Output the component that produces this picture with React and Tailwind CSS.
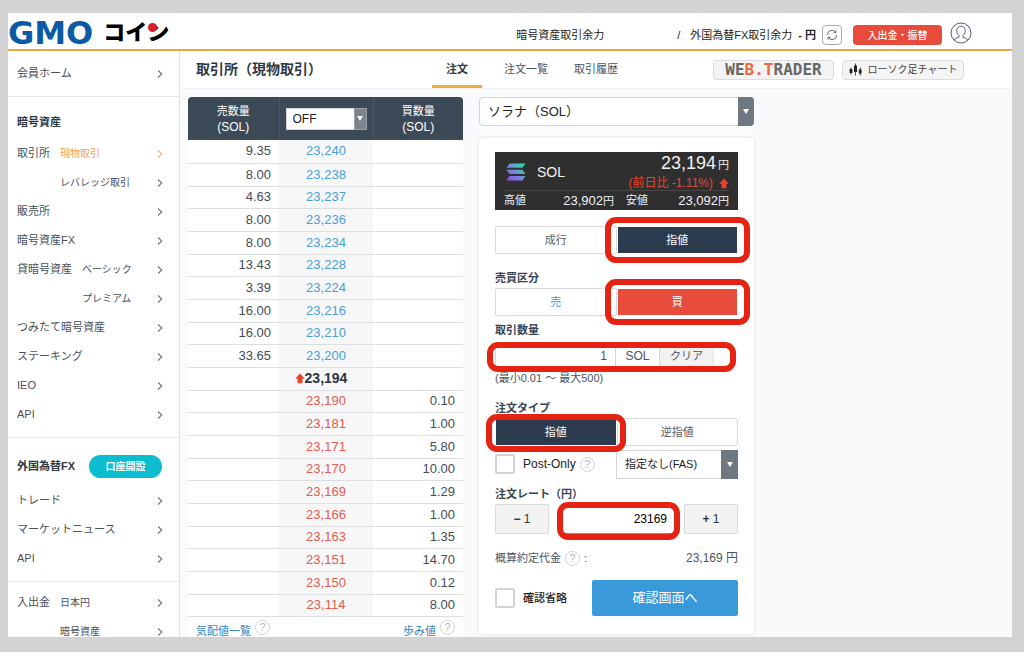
// App.jsx - spot trading screen (order tab)

import React, { useState } from "react";

const menu = [
  { pad: "py-2", items: [{ label: "会員ホーム" }] },
  {
    title: "暗号資産",
    pad: "py-2",
    items: [
      { label: "取引所", sub: "現物取引", active: true },
      { sub: "レバレッジ取引", indent: "pl-[43px]" },
      { label: "販売所" },
      { label: "暗号資産FX" },
      { label: "貸暗号資産", sub: "ベーシック" },
      { sub: "プレミアム", indent: "pl-[65px]" },
      { label: "つみたて暗号資産" },
      { label: "ステーキング" },
      { label: "IEO" },
      { label: "API" },
    ],
  },
  {
    title: "外国為替FX",
    badge: "口座開設",
    pad: "py-2",
    items: [{ label: "トレード" }, { label: "マーケットニュース" }, { label: "API" }],
  },
  {
    pad: "pt-1.5",
    items: [
      { label: "入出金", sub: "日本円" },
      { sub: "暗号資産", indent: "pl-[43px]" },
    ],
  },
];

const asks = [
  ["9.35", "23,240"],
  ["8.00", "23,238"],
  ["4.63", "23,237"],
  ["8.00", "23,236"],
  ["8.00", "23,234"],
  ["13.43", "23,228"],
  ["3.39", "23,224"],
  ["16.00", "23,216"],
  ["16.00", "23,210"],
  ["33.65", "23,200"],
];

const bids = [
  ["23,190", "0.10"],
  ["23,181", "1.00"],
  ["23,171", "5.80"],
  ["23,170", "10.00"],
  ["23,169", "1.29"],
  ["23,166", "1.00"],
  ["23,163", "1.35"],
  ["23,151", "14.70"],
  ["23,150", "0.12"],
  ["23,114", "8.00"],
];

const rows = [
  ...asks.map(([qty, price]) => ({ sell: qty, price, buy: "", color: "text-[#4a9fd4]" })),
  { sell: "", price: "23,194", buy: "", color: "pr-2.5 text-[14px] font-bold text-[#2c3440]", last: true },
  ...bids.map(([price, qty]) => ({ sell: "", price, buy: qty, color: "text-[#e25b4d]" })),
];

const Chevron = () => (
  <svg viewBox="0 0 6 10" className="w-1.5 h-2.5 shrink-0" fill="none" stroke="currentColor" strokeWidth="1.1">
    <path d="M1 1.5 L4.8 5 L1 8.5" />
  </svg>
);

const UpArrow = () => (
  <svg viewBox="0 0 10 11" className="w-2.5 h-[11px] shrink-0" fill="#e8432f">
    <path d="M5 0.5 L9.8 5.8 H7.4 V10.2 H2.6 V5.8 H0.2 Z" />
  </svg>
);

const Help = () => (
  <button
    type="button"
    aria-label="ヘルプ"
    className="w-[15px] h-[15px] shrink-0 rounded-full border border-[#cfd2d5] text-[11px] leading-[13px] text-[#b4b8bc] text-center"
  >
    ?
  </button>
);

// select box with the gray arrow block on its right edge
const Dropdown = ({ label, value, box, field, arrow }) => (
  <div className={`relative ${box}`}>
    <select
      aria-label={label}
      defaultValue={value}
      className={`appearance-none w-full h-full bg-white border border-[#d3d6d9] text-[#222] ${field}`}
    >
      <option>{value}</option>
    </select>
    <span className={`absolute inset-y-0 right-0 flex items-center justify-center pointer-events-none ${arrow}`}>
      <svg viewBox="0 0 6 5" className="w-1.5 h-[5px]" fill="#fff">
        <path d="M0 0 H6 L3 5 Z" />
      </svg>
    </span>
  </div>
);

// red marker drawn around a control
const Ring = ({ place }) => (
  <span className={`absolute z-10 rounded-[11px] border-[6px] border-[#e42313] pointer-events-none ${place}`} />
);

const Label = ({ children, className }) => (
  <h3 className={`h-4 text-[11px] leading-4 font-bold text-[#3a4450] ${className}`}>{children}</h3>
);

const plainBtn = "h-7 w-1/2 border border-[#d8dadd] rounded-xs bg-white text-[11px] text-[#55606b]";
const darkBtn = "w-full h-7 bg-[#2c3b4e] text-[11px] text-white border border-white";

const Header = () => (
  <header className="flex items-center h-[38px] pt-1 pr-10 bg-white border-b-2 border-[#eda640] text-[11px] text-[#222] shrink-0">
    <a href="#home" className="relative flex items-center leading-8">
      <span className="font-['DejaVu_Sans'] font-bold text-[32px] text-[#0b5aa6]">GMO</span>
      <span className="ml-2.5 font-black text-[22px] text-black">コイン</span>
      <span className="absolute top-1.5 right-3 w-[9px] h-[9px] rounded-full bg-[#dc1f26]" />
    </a>
    <div className="flex items-center ml-auto whitespace-nowrap pt-1">
      <span>暗号資産取引余力</span>
      <span className="ml-[73px]">/</span>
      <span className="ml-2.5">外国為替FX取引余力</span>
      <b className="ml-1.5">- 円</b>
      <button
        type="button"
        aria-label="更新"
        className="flex items-center justify-center w-5 h-5 ml-1.5 border border-[#a9acaf] rounded-sm bg-white"
      >
        <svg viewBox="0 0 12 12" className="w-3 h-3" fill="none" stroke="#555" strokeWidth="0.9">
          <path d="M1.5 6 A4.4 4.4 0 0 1 9.6 3.4 M10.5 6 A4.4 4.4 0 0 1 2.4 8.6" />
          <path d="M9.9 1.4 V3.7 H7.6 M2.1 10.6 V8.3 H4.4" />
        </svg>
      </button>
      <button type="button" className="w-[89px] h-5 ml-[11px] rounded-sm bg-[#e84a3c] text-[10px] font-medium text-white">
        入出金・振替
      </button>
    </div>
    <button type="button" aria-label="アカウント" className="ml-2">
      <svg viewBox="0 0 22 22" className="w-[22px] h-[22px]" fill="none" stroke="#566173" strokeWidth="1">
        <circle cx="11" cy="11" r="10" />
        <path d="M4.2 18.2 C5 16.2 7 15.8 9 15.4 V13.6 C7.2 12 6.4 10 6.8 7.8 C7.2 5.4 9 4.2 11 4.2 C13 4.2 14.8 5.4 15.2 7.8 C15.6 10 14.8 12 13 13.6 V15.4 C15 15.8 17 16.2 17.8 18.2" />
      </svg>
    </button>
  </header>
);

const Sidebar = () => (
  <nav className="w-[172px] shrink-0 bg-white border-r border-[#dfe3e8] text-[11px] text-[#46505b]">
    {menu.map((section, i) => (
      <div key={i} className={`pl-[9px] pr-4 border-b border-[#e3e6ea] ${section.pad}`}>
        {section.title && (
          <div className={`flex items-center gap-3.5 font-bold text-[#2f3945] ${section.badge ? "h-10" : "h-[34px]"}`}>
            {section.title}
            {section.badge && (
              <a
                href="#open"
                className="w-[73px] h-[23px] shrink-0 rounded-full bg-[#0cbdd0] text-white text-[10px] leading-[23px] text-center"
              >
                {section.badge}
              </a>
            )}
          </div>
        )}
        {section.items.map((item, n) => (
          <a key={n} href="#menu" className={`flex items-center h-[29px] ${item.indent || ""}`}>
            {item.label && <span className="mr-2.5">{item.label}</span>}
            {item.sub && <span className={`text-[10px] ${item.active ? "text-[#f3a24a]" : ""}`}>{item.sub}</span>}
            <span className={`ml-auto ${item.active ? "text-[#f3b470]" : "text-[#6b747e]"}`}>
              <Chevron />
            </span>
          </a>
        ))}
      </div>
    ))}
  </nav>
);

const TitleBar = () => (
  <div className="flex items-center h-[38px] pl-4 pr-12 bg-white border-b border-[#eceef1] text-[11px] text-[#4a5664] shrink-0 whitespace-nowrap">
    <h1 className="w-[236px] text-[14px] font-bold text-[#2f3945]">取引所（現物取引）</h1>
    <a href="#order" className="flex items-center justify-center w-[50px] h-full pt-[3px] border-b-3 border-[#ecae36] font-bold text-[#2f3945]">
      注文
    </a>
    <a href="#list" className="ml-[22px]">
      注文一覧
    </a>
    <a href="#history" className="ml-[26px]">
      取引履歴
    </a>
    <button
      type="button"
      className="w-[121px] h-5 ml-auto border border-[#dcdcdc] rounded-sm bg-[#f4f4f4] font-['DejaVu_Sans_Mono'] font-bold text-[16px] leading-[18px] text-[#666]"
    >
      WE<span className="text-[#ee6747]">B.T</span>RADER
    </button>
    <button
      type="button"
      className="flex items-center justify-center gap-1.5 w-[122px] h-5 ml-2 border border-[#dcdcdc] rounded-sm bg-[#f4f4f4] text-[10px] text-[#444]"
    >
      <svg viewBox="0 0 13 13" className="w-[13px] h-[13px]" fill="#222">
        <path d="M0.6 6 H3.4 V10 H0.6 Z M1.6 4.5 H2.4 V11.5 H1.6 Z" />
        <path d="M5 2.5 H8 V9 H5 Z M6.1 0.5 H6.9 V12.5 H6.1 Z" />
        <path d="M9.8 6.5 H12.6 V10.5 H9.8 Z M10.8 4.5 H11.6 V12.5 H10.8 Z" />
      </svg>
      ローソク足チャート
    </button>
  </div>
);

const OrderBook = () => (
  <section className="w-[275px] shrink-0 rounded-t-sm bg-white overflow-hidden">
    <table className="w-full table-fixed border-collapse text-[13px] leading-4 text-[#444c55]">
      <thead>
        <tr className="h-[43px] bg-[#3c4957] text-white text-[12px]">
          <th className="w-[91px] p-0 font-normal">
            <span className="text-[11px]">売数量</span>
            <br />
            (SOL)
          </th>
          <th className="w-[94px] p-0 px-1.5 font-normal border-x border-[#4b5765]">
            <Dropdown
              label="呼値"
              value="OFF"
              box="h-[22px]"
              field="pl-1.5 text-[12px] text-left"
              arrow="w-[13px] bg-[#7b838c] border border-[#9aa0a7]"
            />
          </th>
          <th className="p-0 font-normal">
            <span className="text-[11px]">買数量</span>
            <br />
            (SOL)
          </th>
        </tr>
      </thead>
      <tbody>
        {rows.map((row) => (
          <tr key={row.price} className="h-[23px] nth-[3n]:h-[22px] border-b border-[#dcdfe2]">
            <td className="p-0 pr-2 text-right">{row.sell}</td>
            <td className={`p-0 text-center bg-[#f7f7f8] ${row.color}`}>
              <span className="inline-flex items-center">
                {row.last && <UpArrow />}
                {row.price}
              </span>
            </td>
            <td className="p-0 pr-2 text-right">{row.buy}</td>
          </tr>
        ))}
      </tbody>
    </table>
    <div className="flex items-center gap-1 px-2 text-[11px] leading-4 text-[#3585bd]">
      <a href="#board" className="pt-1.5">
        気配値一覧
      </a>
      <Help />
      <a href="#ticks" className="pt-1.5 ml-auto">
        歩み値
      </a>
      <Help />
    </div>
  </section>
);

const PricePanel = () => (
  <div className="h-[58px] px-[9px] bg-[#2f2f2f] text-[#f2f2f2] text-[11px]">
    <div className="flex items-center h-[39px] pt-0.5 border-b border-[#474747]">
      <svg viewBox="0 0 20 18" className="w-5 h-[18px] ml-0.5">
        <defs>
          <linearGradient id="sol" x1="0" y1="1" x2="1" y2="0">
            <stop offset="0" stopColor="#9945ff" />
            <stop offset="0.5" stopColor="#6f8fd8" />
            <stop offset="1" stopColor="#19f0a0" />
          </linearGradient>
        </defs>
        <path
          fill="url(#sol)"
          d="M3.6 0.5 H19.5 L16.4 4.8 H0.5 Z M0.5 6.8 H16.4 L19.5 11.1 H3.6 Z M3.6 13.1 H19.5 L16.4 17.4 H0.5 Z"
        />
      </svg>
      <span className="ml-[11px] text-[14px]">SOL</span>
      <div className="ml-auto text-right">
        <p className="text-[18px] leading-5">
          23,194<span className="ml-0.5 text-[11px]">円</span>
        </p>
        <p className="flex items-center justify-end gap-1.5 text-[12px] leading-4 text-[#e04a34]">
          (前日比 -1.11%)
          <UpArrow />
        </p>
      </div>
    </div>
    <div className="flex items-center h-[19px]">
      <span>高値</span>
      <span className="ml-auto">
        <span className="text-[13px]">23,902</span>円
      </span>
      <span className="ml-3">安値</span>
      <span className="w-[81px] text-right">
        <span className="text-[13px]">23,092</span>円
      </span>
    </div>
  </div>
);

const OrderForm = () => {
  const [amount, setAmount] = useState("1");
  const [rate, setRate] = useState("23169");

  return (
    <form className="mt-3 px-4 pt-3.5 pb-[18px] bg-white rounded-sm shadow-[0_0_4px_rgba(0,0,0,0.12)]">
      <PricePanel />

      <div className="flex mt-4">
        <button type="button" className={plainBtn}>
          成行
        </button>
        <div className="relative w-1/2">
          <button type="button" className={darkBtn}>
            指値
          </button>
          <Ring place="-inset-x-[12px] -inset-y-[9px]" />
        </div>
      </div>

      <Label className="mt-4">売買区分</Label>
      <div className="flex mt-0.5">
        <button type="button" className="h-7 w-1/2 border border-[#d8dadd] rounded-xs bg-white text-[11px] text-[#3d9be0]">
          売
        </button>
        <div className="relative w-1/2">
          <button type="button" className="w-full h-7 bg-[#e74c3c] border border-white text-[11px] text-white">
            買
          </button>
          <Ring place="-inset-x-[12px] -inset-y-[9px]" />
        </div>
      </div>

      <Label className="mt-1.5">取引数量</Label>
      <div className="relative flex h-7 mt-1 pr-6 text-[12px] leading-7 text-[#4c555f]">
        <input
          aria-label="取引数量"
          value={amount}
          onChange={(e) => setAmount(e.target.value)}
          className="flex-1 min-w-0 pr-2 border border-[#d3d6d9] text-right"
        />
        <span className="w-11 border-r border-[#d3d6d9] text-center">SOL</span>
        <button
          type="button"
          onClick={() => setAmount("")}
          className="w-[54px] border-r border-[#e3e3e3] bg-[#f1f1f1] text-[11px]"
        >
          クリア
        </button>
        <Ring place="-left-2 right-0.5 top-0 -bottom-0.5" />
      </div>
      <p className="h-4 text-[11px] leading-4 text-[#4c555f]">(最小0.01 ～ 最大500)</p>

      <Label className="mt-3.5">注文タイプ</Label>
      <div className="flex mt-0.5">
        <div className="relative w-1/2">
          <button type="button" className={darkBtn}>
            指値
          </button>
          <Ring place="-inset-x-[9px] -top-1 -bottom-1.5" />
        </div>
        <button type="button" className={plainBtn}>
          逆指値
        </button>
      </div>

      <div className="flex items-center h-7 mt-1 text-[12px] text-[#222]">
        <label className="flex items-center gap-2">
          <input type="checkbox" className="appearance-none w-5 h-5 border-2 border-[#d3d3d3] rounded-xs bg-white" />
          Post-Only
        </label>
        <span className="flex ml-1">
          <Help />
        </span>
        <Dropdown
          label="執行条件"
          value="指定なし(FAS)"
          box="w-[122px] h-[29px] ml-auto"
          field="pl-2 text-[11px]"
          arrow="w-[17px] bg-[#6f7781]"
        />
      </div>

      <Label className="mt-2">注文レート（円）</Label>
      <div className="flex h-[30px] mt-0.5 text-[12px] text-[#333]">
        <button type="button" className="w-[54px] border border-[#dadada] rounded-xs bg-[#f2f2f2]">
          <b>−</b> 1
        </button>
        <div className="relative flex-1 ml-3 mr-2">
          <input
            aria-label="注文レート"
            value={rate}
            onChange={(e) => setRate(e.target.value)}
            className="w-full h-full pr-2 border border-[#8a9096] text-right font-medium text-black"
          />
          <Ring place="-inset-x-1 -top-0.5 -bottom-1.5" />
        </div>
        <button type="button" className="w-[54px] border border-[#dadada] rounded-xs bg-[#f2f2f2]">
          <b>+</b> 1
        </button>
      </div>

      <div className="flex items-center gap-1 h-5 mt-3.5 text-[11px] text-[#4c555f]">
        概算約定代金
        <Help />:
        <span className="ml-auto text-[12px]">23,169 円</span>
      </div>

      <div className="flex items-center justify-between mt-3">
        <label className="flex items-center gap-2 text-[11px] font-medium text-[#222]">
          <input type="checkbox" className="appearance-none w-5 h-5 border-2 border-[#d3d3d3] rounded-xs bg-white" />
          確認省略
        </label>
        <button type="button" className="w-[146px] h-9 rounded-xs bg-[#3a9ad9] text-[13px] text-white">
          確認画面へ
        </button>
      </div>
    </form>
  );
};

const App = () => {
  return (
    <div className="h-screen pl-2 pr-3 pt-[13px] pb-[15px] bg-[#d3d3d3] font-['Liberation_Sans','Noto_Sans_CJK_JP',sans-serif]">
      <div className="flex flex-col h-full overflow-hidden">
        <Header />
        <div className="flex flex-1 min-h-0">
          <Sidebar />
          <main className="flex flex-col flex-1 min-w-0 bg-[#f8fafc]">
            <TitleBar />
            <div className="flex gap-4 flex-1 min-h-0 pl-2 pt-2">
              <OrderBook />
              <div className="w-[275px] shrink-0">
                <Dropdown
                  label="銘柄"
                  value="ソラナ（SOL）"
                  box="h-[29px]"
                  field="pl-2 rounded-sm text-[13px]"
                  arrow="w-4 rounded-r-sm bg-[#6f7781]"
                />
                <OrderForm />
              </div>
            </div>
          </main>
        </div>
      </div>
    </div>
  );
};

export default App;
